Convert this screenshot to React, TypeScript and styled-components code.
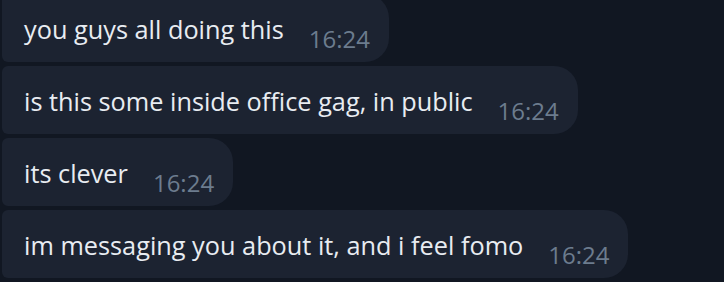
import React from "react";
import styled, { createGlobalStyle } from "styled-components";

const Global = createGlobalStyle`
  html, body { margin: 0; padding: 0; background: #111722; }
  body { font-family: "Open Sans", "Noto Sans", sans-serif; }
`;

const Chat = styled.div`
  width: 724px;
  height: 282px;
  overflow: hidden;
  background: #111722;
  padding: 0 0 0 2px;
  box-sizing: border-box;
`;

const List = styled.div`
  display: flex;
  flex-direction: column;
  align-items: flex-start;
  gap: 4px;
  margin-top: -6px;
`;

const Bubble = styled.div`
  display: flex;
  align-items: flex-end;
  background: #1c2331;
  border-radius: 6px 24px 24px 6px;
  padding: 19px 19px 17px 22px;
  box-sizing: border-box;
`;

const Text = styled.span`
  color: #e8ecf1;
  font-size: 25.3px;
  line-height: 32px;
  white-space: nowrap;
`;

const Time = styled.span`
  color: #6c7c8e;
  font-size: 24px;
  line-height: 24px;
  margin-left: 25px;
  margin-bottom: -6px;
  white-space: nowrap;
`;

const messages = [
  "you guys all doing this",
  "is this some inside office gag, in public",
  "its clever",
  "im messaging you about it, and i feel fomo",
];

export default function App() {
  return (
    <>
      <Global />
      <Chat>
        <List>
          {messages.map((m) => (
            <Bubble key={m}>
              <Text>{m}</Text>
              <Time>16:24</Time>
            </Bubble>
          ))}
        </List>
      </Chat>
    </>
  );
}
